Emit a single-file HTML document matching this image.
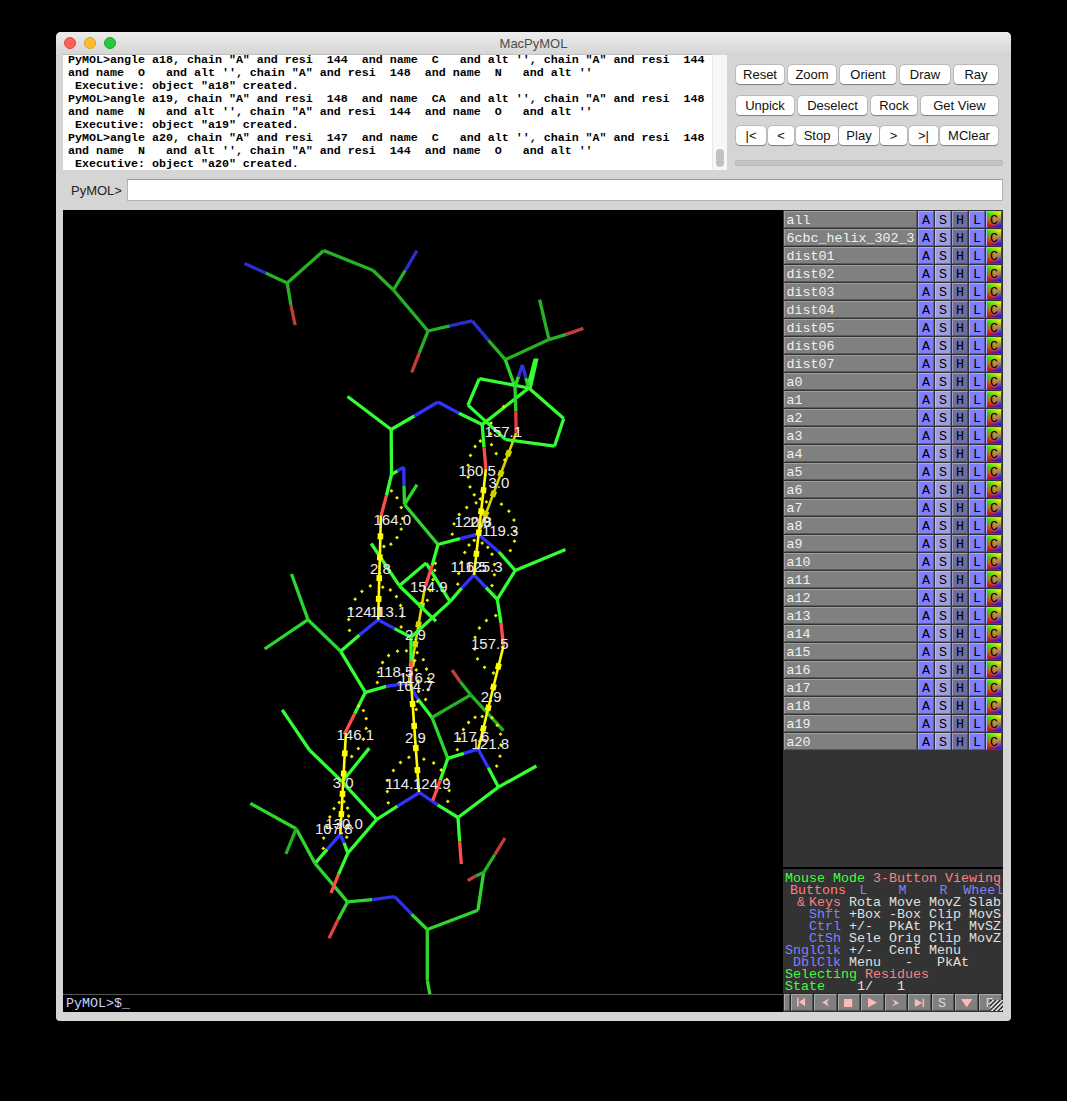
<!DOCTYPE html>
<html><head><meta charset="utf-8">
<style>
*{margin:0;padding:0;box-sizing:border-box}
html,body{width:1067px;height:1101px;background:#000;overflow:hidden;position:relative;font-family:"Liberation Sans",sans-serif}
.abs{position:absolute}
#win{position:absolute;left:56px;top:32px;width:955px;height:989px;background:#d5d5d5;border-radius:5px 5px 4px 4px;overflow:hidden}
#title{position:absolute;left:0;top:0;width:955px;height:22px;background:linear-gradient(#ececec,#d6d6d6);text-align:center;font-size:13px;line-height:24px;color:#4d4d4d}
.dot{position:absolute;top:5px;width:12px;height:12px;border-radius:50%}
#console{position:absolute;left:7px;top:22px;width:649px;height:116px;background:#fff;overflow:hidden;border-top:1px solid #bfbfbf}
#console pre{position:absolute;left:5px;top:-1px;font-family:"Liberation Mono",monospace;font-weight:bold;font-size:11.67px;line-height:13px;color:#000;white-space:pre}
#sbar{position:absolute;left:656px;top:23px;width:15px;height:115px;background:#f7f7f7;border-left:1px solid #e8e8e8}
#thumb{position:absolute;left:3px;top:94px;width:8px;height:18px;background:#c2c2c2;border-radius:4px}
.btn{position:absolute;height:19px;background:#fff;border-radius:4px;box-shadow:0 0.5px 1px rgba(0,0,0,0.35),0 0 0 0.5px rgba(0,0,0,0.18);font-size:13px;line-height:19px;text-align:center;color:#111}
#prog{position:absolute;left:679px;top:128px;width:268px;height:6px;background:#c4c4c4;border:1px solid #b8b8b8;border-radius:2px}
#cmdlabel{position:absolute;left:15px;top:151px;font-size:13px;color:#222;line-height:16px}
#cmd{position:absolute;left:71px;top:147px;width:876px;height:22px;background:#fff;border:1px solid #b4b4b4;border-top-color:#999}
#view{position:absolute;left:7px;top:178px;width:720px;height:785px;background:#000;overflow:hidden}
#cline{position:absolute;left:7px;top:962px;width:720px;height:18px;background:#000;border-top:1px solid #555}
#cline span{position:absolute;left:3px;top:2px;font-family:"Liberation Mono",monospace;font-size:13.33px;line-height:14px;color:#d0d0ff}
#panel{position:absolute;left:727px;top:178px;width:220px;height:802px;background:#333}
.orow{position:absolute;left:0;width:220px;height:18px;background:#333}
.oname{position:absolute;left:1px;top:1px;width:133px;height:17px;background:#808080;border-top:1px solid #a0a0a0;border-left:1px solid #a0a0a0;border-bottom:1px solid #5a5a5a;border-right:1px solid #5a5a5a;font-family:"Liberation Mono",monospace;font-size:13.33px;line-height:18.5px;color:#f0f0f0;padding-left:1.5px;white-space:pre}
.ob{position:absolute;top:1px;width:16px;height:17px;font-family:"Liberation Mono",monospace;font-size:13.33px;line-height:18.5px;color:#000;text-align:center;border-top:1px solid rgba(255,255,255,0.35);border-left:1px solid rgba(255,255,255,0.35);border-bottom:1px solid rgba(0,0,0,0.3);border-right:1px solid rgba(0,0,0,0.3)}
.ba{left:135px;background:#8080ff}
.bs{left:152px;background:#9f9fdf}
.bh{left:169px;background:#6f6f9f}
.bl{left:186px;background:#8080ff}
.bc{left:203px;background:linear-gradient(to right,#ff0000,#1a00ff);border-top-color:#b4b4ff;border-left-color:#b4b4ff;border-bottom-color:#404080;border-right-color:#404080}
.bc::before{content:"";position:absolute;left:0;top:0;right:0;bottom:0;background:linear-gradient(to right,#00ff00,#ffff00);-webkit-mask-image:linear-gradient(to bottom,#000,transparent);mask-image:linear-gradient(to bottom,#000,transparent)}
.bc::after{content:"";position:absolute;left:0;top:0;right:0;bottom:0;background:radial-gradient(circle at 50% 50%,rgba(255,130,30,0.75) 0%,rgba(255,130,30,0) 70%)}
.bc span{position:relative;z-index:1}
#ptext{position:absolute;left:0;top:657px;width:220px;height:127px;background:#333;border-top:2px solid #000}
.pt{position:absolute;font-family:"Liberation Mono",monospace;font-size:13.33px;line-height:12px;white-space:pre}
.g{color:#40ff40} .r{color:#ff7f7f} .b{color:#7f7fff}
#pbtns{position:absolute;left:0;top:783px;width:220px;height:18px;background:#262626}
.pb{position:absolute;top:1px;height:17px;background:#808080;border-top:1px solid #a8a8a8;border-left:1px solid #a8a8a8;border-bottom:1px solid #505050;border-right:1px solid #505050}
</style></head><body>
<div id="win">
 <div id="title">MacPyMOL
  <div class="dot" style="left:8px;background:#fe5f57;border:0.5px solid #e2463f"></div>
  <div class="dot" style="left:28px;background:#febc2e;border:0.5px solid #e1a116"></div>
  <div class="dot" style="left:48px;background:#28c840;border:0.5px solid #1aab29"></div>
 </div>
 <div id="console"><pre>PyMOL&gt;angle a18, chain "A" and resi  144  and name  C   and alt '', chain "A" and resi  144
and name  O   and alt '', chain "A" and resi  148  and name  N   and alt ''
 Executive: object "a18" created.
PyMOL&gt;angle a19, chain "A" and resi  148  and name  CA  and alt '', chain "A" and resi  148
and name  N   and alt '', chain "A" and resi  144  and name  O   and alt ''
 Executive: object "a19" created.
PyMOL&gt;angle a20, chain "A" and resi  147  and name  C   and alt '', chain "A" and resi  148
and name  N   and alt '', chain "A" and resi  144  and name  O   and alt ''
 Executive: object "a20" created.</pre></div>
 <div id="sbar"><div id="thumb"></div></div>
 <div class="btn" style="left:680px;top:33px;width:48px">Reset</div>
 <div class="btn" style="left:732px;top:33px;width:48px">Zoom</div>
 <div class="btn" style="left:784px;top:33px;width:56px">Orient</div>
 <div class="btn" style="left:844px;top:33px;width:50px">Draw</div>
 <div class="btn" style="left:898px;top:33px;width:44px">Ray</div>
 <div class="btn" style="left:680px;top:64px;width:58px">Unpick</div>
 <div class="btn" style="left:742px;top:64px;width:69px">Deselect</div>
 <div class="btn" style="left:815px;top:64px;width:46px">Rock</div>
 <div class="btn" style="left:865px;top:64px;width:77px">Get View</div>
 <div class="btn" style="left:680px;top:94px;width:30px">|&lt;</div>
 <div class="btn" style="left:712px;top:94px;width:26px">&lt;</div>
 <div class="btn" style="left:740px;top:94px;width:42px">Stop</div>
 <div class="btn" style="left:783px;top:94px;width:40px">Play</div>
 <div class="btn" style="left:824px;top:94px;width:27px">&gt;</div>
 <div class="btn" style="left:853px;top:94px;width:29px">&gt;|</div>
 <div class="btn" style="left:884px;top:94px;width:58px">MClear</div>
 <div id="prog"></div>
 <div id="cmdlabel">PyMOL&gt;</div>
 <div id="cmd"></div>
 <div id="view"><svg width="720" height="785" viewBox="63 210 720 785" style="position:absolute;left:0;top:0">
<line x1="516.1" y1="433.0" x2="478.2" y2="534.3" stroke="#d2d200" stroke-width="2.6"/>
<rect x="-3" y="-2.8" width="6" height="5.6" fill="#d2d200" transform="translate(508.5,453.3) rotate(110.5)"/>
<rect x="-3" y="-2.8" width="6" height="5.6" fill="#d2d200" transform="translate(500.9,473.5) rotate(110.5)"/>
<rect x="-3" y="-2.8" width="6" height="5.6" fill="#d2d200" transform="translate(493.4,493.8) rotate(110.5)"/>
<rect x="-3" y="-2.8" width="6" height="5.6" fill="#d2d200" transform="translate(485.8,514.0) rotate(110.5)"/>
<line x1="425.1" y1="585.8" x2="408.7" y2="682.9" stroke="#d8d800" stroke-width="2.6"/>
<rect x="-3" y="-2.8" width="6" height="5.6" fill="#d8d800" transform="translate(421.8,605.2) rotate(99.6)"/>
<rect x="-3" y="-2.8" width="6" height="5.6" fill="#d8d800" transform="translate(418.5,624.6) rotate(99.6)"/>
<rect x="-3" y="-2.8" width="6" height="5.6" fill="#d8d800" transform="translate(415.3,644.1) rotate(99.6)"/>
<rect x="-3" y="-2.8" width="6" height="5.6" fill="#d8d800" transform="translate(412.0,663.5) rotate(99.6)"/>
<g stroke-width="3.3" stroke-linecap="butt" fill="none">
<line x1="244.6" y1="263.4" x2="265.6" y2="273.1" stroke="#2d2dcd"/>
<line x1="265.6" y1="273.1" x2="287.2" y2="282.9" stroke="#25b225"/>
<line x1="287.2" y1="282.9" x2="290.9" y2="305.0" stroke="#25b225"/>
<line x1="290.9" y1="305.0" x2="295.2" y2="325.2" stroke="#c33c3c"/>
<line x1="287.2" y1="282.9" x2="323.7" y2="250.6" stroke="#25b225"/>
<line x1="323.7" y1="250.6" x2="372.8" y2="270.3" stroke="#25b225"/>
<line x1="372.8" y1="270.3" x2="393.4" y2="290.0" stroke="#25b225"/>
<line x1="393.4" y1="290.0" x2="405.3" y2="270.3" stroke="#25b225"/>
<line x1="405.3" y1="270.3" x2="417.0" y2="250.6" stroke="#2d2dcd"/>
<line x1="393.4" y1="290.0" x2="428.0" y2="331.0" stroke="#25b225"/>
<line x1="428.0" y1="331.0" x2="419.3" y2="352.8" stroke="#25b225"/>
<line x1="419.3" y1="352.8" x2="411.7" y2="372.5" stroke="#c33c3c"/>
<line x1="428.0" y1="331.0" x2="449.7" y2="325.9" stroke="#25b225"/>
<line x1="449.7" y1="325.9" x2="472.2" y2="320.9" stroke="#2d2dcd"/>
<line x1="472.2" y1="320.9" x2="488.5" y2="340.4" stroke="#2d2dcd"/>
<line x1="488.5" y1="340.4" x2="505.3" y2="359.7" stroke="#25b225"/>
<line x1="505.3" y1="359.7" x2="549.0" y2="339.6" stroke="#25b225"/>
<line x1="549.0" y1="339.6" x2="539.6" y2="299.7" stroke="#25b225"/>
<line x1="549.0" y1="339.6" x2="566.4" y2="334.4" stroke="#25b225"/>
<line x1="566.4" y1="334.4" x2="583.3" y2="328.4" stroke="#c33c3c"/>
<line x1="505.3" y1="359.7" x2="515.0" y2="387.0" stroke="#2dd72d"/>
<line x1="479.3" y1="378.6" x2="528.8" y2="388.0" stroke="#33ff33"/>
<line x1="479.3" y1="378.6" x2="468.0" y2="405.1" stroke="#33ff33"/>
<line x1="468.0" y1="405.1" x2="505.6" y2="439.6" stroke="#33ff33"/>
<line x1="505.6" y1="439.6" x2="554.5" y2="446.2" stroke="#33ff33"/>
<line x1="554.5" y1="446.2" x2="563.7" y2="418.6" stroke="#33ff33"/>
<line x1="563.7" y1="418.6" x2="528.8" y2="388.0" stroke="#33ff33"/>
<line x1="528.8" y1="388.0" x2="482.2" y2="424.6" stroke="#33ff33"/>
<polygon points="533.6,358.5 538.6,358.5 531.5,390 525.8,388" fill="#33ff33" stroke="none"/>
<line x1="515.0" y1="387.0" x2="518.5" y2="376.4" stroke="#2dd72d"/>
<line x1="518.5" y1="376.4" x2="522.4" y2="364.8" stroke="#3030e1"/>
<line x1="522.4" y1="364.8" x2="525.8" y2="378.1" stroke="#3030e1"/>
<line x1="525.8" y1="378.1" x2="528.4" y2="387.0" stroke="#2dd72d"/>
<line x1="515.0" y1="387.0" x2="515.8" y2="411.2" stroke="#2dd72d"/>
<line x1="515.8" y1="411.2" x2="516.1" y2="433.0" stroke="#e14141"/>
<line x1="347.5" y1="396.5" x2="391.2" y2="429.5" stroke="#33ff33"/>
<line x1="391.2" y1="429.5" x2="414.3" y2="416.0" stroke="#33ff33"/>
<line x1="414.3" y1="416.0" x2="438.0" y2="402.0" stroke="#3333ff"/>
<line x1="438.0" y1="402.0" x2="459.0" y2="413.3" stroke="#3333ff"/>
<line x1="459.0" y1="413.3" x2="482.2" y2="424.6" stroke="#33ff33"/>
<line x1="482.2" y1="424.6" x2="484.0" y2="447.4" stroke="#33ff33"/>
<line x1="484.0" y1="447.4" x2="485.9" y2="469.0" stroke="#ff4c4c"/>
<line x1="391.2" y1="429.5" x2="391.5" y2="474.5" stroke="#33ff33"/>
<line x1="391.5" y1="474.5" x2="397.6" y2="470.9" stroke="#33ff33"/>
<line x1="397.6" y1="470.9" x2="403.8" y2="467.2" stroke="#3333ff"/>
<line x1="403.8" y1="467.2" x2="404.0" y2="485.7" stroke="#3333ff"/>
<line x1="404.0" y1="485.7" x2="404.5" y2="504.5" stroke="#2dd72d"/>
<line x1="404.5" y1="504.5" x2="417.0" y2="484.7" stroke="#2dd72d"/>
<line x1="404.5" y1="504.5" x2="438.0" y2="544.5" stroke="#2dd72d"/>
<line x1="391.5" y1="474.5" x2="386.4" y2="495.7" stroke="#33ff33"/>
<line x1="386.4" y1="495.7" x2="381.0" y2="516.0" stroke="#ff4c4c"/>
<line x1="438.0" y1="544.5" x2="460.0" y2="538.7" stroke="#33ff33"/>
<line x1="460.0" y1="538.7" x2="478.2" y2="534.2" stroke="#3333ff"/>
<line x1="478.2" y1="534.2" x2="499.0" y2="552.0" stroke="#3333ff"/>
<line x1="499.0" y1="552.0" x2="515.2" y2="570.5" stroke="#33ff33"/>
<line x1="515.2" y1="570.5" x2="565.5" y2="549.6" stroke="#33ff33"/>
<line x1="515.2" y1="570.5" x2="497.3" y2="599.3" stroke="#33ff33"/>
<line x1="497.3" y1="599.3" x2="486.0" y2="587.5" stroke="#33ff33"/>
<line x1="486.0" y1="587.5" x2="474.0" y2="574.9" stroke="#3333ff"/>
<line x1="474.0" y1="574.9" x2="461.6" y2="588.2" stroke="#3333ff"/>
<line x1="461.6" y1="588.2" x2="450.0" y2="601.6" stroke="#33ff33"/>
<line x1="450.0" y1="601.6" x2="426.2" y2="563.1" stroke="#33ff33"/>
<line x1="426.2" y1="563.1" x2="399.3" y2="585.7" stroke="#33ff33"/>
<line x1="399.3" y1="585.7" x2="371.2" y2="543.5" stroke="#33ff33"/>
<line x1="450.0" y1="601.6" x2="411.0" y2="637.2" stroke="#33ff33"/>
<line x1="399.3" y1="585.7" x2="436.0" y2="621.2" stroke="#33ff33"/>
<line x1="438.0" y1="544.5" x2="432.1" y2="565.7" stroke="#33ff33"/>
<line x1="432.1" y1="565.7" x2="425.5" y2="586.0" stroke="#ff4c4c"/>
<line x1="497.3" y1="599.3" x2="501.0" y2="623.0" stroke="#33ff33"/>
<line x1="501.0" y1="623.0" x2="503.5" y2="645.7" stroke="#ff4c4c"/>
<line x1="291.5" y1="574.0" x2="308.0" y2="619.7" stroke="#2dd72d"/>
<line x1="264.6" y1="649.0" x2="308.0" y2="619.7" stroke="#2dd72d"/>
<line x1="308.0" y1="619.7" x2="340.7" y2="651.3" stroke="#2dd72d"/>
<line x1="340.7" y1="651.3" x2="359.5" y2="634.9" stroke="#33ff33"/>
<line x1="359.5" y1="634.9" x2="378.2" y2="619.7" stroke="#3333ff"/>
<line x1="378.2" y1="619.7" x2="394.6" y2="628.6" stroke="#3333ff"/>
<line x1="394.6" y1="628.6" x2="411.0" y2="637.2" stroke="#33ff33"/>
<line x1="411.0" y1="637.2" x2="411.0" y2="660.7" stroke="#33ff33"/>
<line x1="411.0" y1="660.7" x2="411.0" y2="681.8" stroke="#ff4c4c"/>
<line x1="340.7" y1="651.3" x2="365.4" y2="692.3" stroke="#33ff33"/>
<line x1="365.4" y1="692.3" x2="386.4" y2="686.4" stroke="#33ff33"/>
<line x1="386.4" y1="686.4" x2="408.7" y2="682.9" stroke="#3333ff"/>
<line x1="408.7" y1="682.9" x2="418.0" y2="699.3" stroke="#3333ff"/>
<line x1="418.0" y1="699.3" x2="432.0" y2="717.5" stroke="#33ff33"/>
<line x1="432.0" y1="717.5" x2="470.7" y2="694.8" stroke="#25b225"/>
<line x1="470.7" y1="694.8" x2="460.2" y2="681.8" stroke="#25b225"/>
<line x1="460.2" y1="681.8" x2="452.0" y2="670.0" stroke="#c33c3c"/>
<line x1="470.7" y1="694.8" x2="503.5" y2="730.6" stroke="#25b225"/>
<line x1="432.0" y1="717.5" x2="447.8" y2="758.4" stroke="#2dd72d"/>
<line x1="365.4" y1="692.3" x2="354.8" y2="713.4" stroke="#33ff33"/>
<line x1="354.8" y1="713.4" x2="344.3" y2="734.5" stroke="#ff4c4c"/>
<line x1="282.2" y1="709.8" x2="309.4" y2="750.0" stroke="#33ff33"/>
<line x1="309.4" y1="750.0" x2="342.2" y2="781.8" stroke="#33ff33"/>
<line x1="342.2" y1="781.8" x2="369.3" y2="748.1" stroke="#33ff33"/>
<line x1="342.2" y1="781.8" x2="376.8" y2="819.3" stroke="#33ff33"/>
<line x1="376.8" y1="819.3" x2="397.5" y2="806.2" stroke="#33ff33"/>
<line x1="397.5" y1="806.2" x2="419.5" y2="792.5" stroke="#3333ff"/>
<line x1="419.5" y1="792.5" x2="437.7" y2="804.8" stroke="#3333ff"/>
<line x1="437.7" y1="804.8" x2="458.0" y2="817.5" stroke="#33ff33"/>
<line x1="447.8" y1="758.4" x2="463.9" y2="753.4" stroke="#33ff33"/>
<line x1="463.9" y1="753.4" x2="478.2" y2="749.2" stroke="#3333ff"/>
<line x1="478.2" y1="749.2" x2="488.3" y2="767.7" stroke="#3333ff"/>
<line x1="488.3" y1="767.7" x2="498.4" y2="787.1" stroke="#33ff33"/>
<line x1="498.4" y1="787.1" x2="536.4" y2="766.0" stroke="#33ff33"/>
<line x1="498.4" y1="787.1" x2="458.0" y2="817.5" stroke="#33ff33"/>
<line x1="447.8" y1="758.4" x2="440.2" y2="780.4" stroke="#33ff33"/>
<line x1="440.2" y1="780.4" x2="432.7" y2="800.6" stroke="#ff4c4c"/>
<line x1="458.0" y1="817.5" x2="459.6" y2="841.1" stroke="#33ff33"/>
<line x1="459.6" y1="841.1" x2="461.3" y2="864.0" stroke="#ff4c4c"/>
<line x1="376.8" y1="819.3" x2="347.8" y2="853.1" stroke="#33ff33"/>
<line x1="347.8" y1="853.1" x2="344.0" y2="842.8" stroke="#33ff33"/>
<line x1="344.0" y1="842.8" x2="340.3" y2="834.3" stroke="#3333ff"/>
<line x1="340.3" y1="834.3" x2="327.2" y2="849.3" stroke="#3333ff"/>
<line x1="327.2" y1="849.3" x2="315.0" y2="863.4" stroke="#33ff33"/>
<line x1="250.3" y1="803.4" x2="296.2" y2="828.7" stroke="#2dd72d"/>
<line x1="296.2" y1="828.7" x2="315.0" y2="863.4" stroke="#2dd72d"/>
<line x1="296.2" y1="828.7" x2="285.9" y2="854.0" stroke="#25b225"/>
<line x1="315.0" y1="863.4" x2="347.5" y2="901.9" stroke="#2dd72d"/>
<line x1="347.8" y1="853.1" x2="338.4" y2="874.6" stroke="#33ff33"/>
<line x1="338.4" y1="874.6" x2="331.0" y2="893.0" stroke="#ff4c4c"/>
<line x1="347.5" y1="901.9" x2="372.2" y2="899.6" stroke="#2dd72d"/>
<line x1="372.2" y1="899.6" x2="394.7" y2="896.7" stroke="#3030e1"/>
<line x1="394.7" y1="896.7" x2="411.6" y2="914.2" stroke="#3030e1"/>
<line x1="411.6" y1="914.2" x2="427.3" y2="929.5" stroke="#2dd72d"/>
<line x1="427.3" y1="929.5" x2="477.9" y2="910.2" stroke="#2dd72d"/>
<line x1="477.9" y1="910.2" x2="483.6" y2="872.6" stroke="#2dd72d"/>
<line x1="483.6" y1="872.6" x2="494.8" y2="854.6" stroke="#25b225"/>
<line x1="494.8" y1="854.6" x2="505.0" y2="838.0" stroke="#c33c3c"/>
<line x1="483.6" y1="872.6" x2="475.7" y2="876.0" stroke="#25b225"/>
<line x1="475.7" y1="876.0" x2="467.8" y2="880.5" stroke="#c33c3c"/>
<line x1="427.3" y1="929.5" x2="427.3" y2="980.6" stroke="#2dd72d"/>
<line x1="427.3" y1="980.6" x2="430.2" y2="996.0" stroke="#2dd72d"/>
<line x1="347.5" y1="901.9" x2="338.0" y2="919.8" stroke="#2dd72d"/>
<line x1="338.0" y1="919.8" x2="329.0" y2="938.3" stroke="#e14141"/>
</g>
<g>
<line x1="485.9" y1="469.0" x2="474.0" y2="575.0" stroke="#ffff00" stroke-width="2.6"/>
<rect x="-3" y="-2.8" width="6" height="5.6" fill="#ffff00" transform="translate(483.5,490.2) rotate(96.4)"/>
<rect x="-3" y="-2.8" width="6" height="5.6" fill="#ffff00" transform="translate(481.1,511.4) rotate(96.4)"/>
<rect x="-3" y="-2.8" width="6" height="5.6" fill="#ffff00" transform="translate(478.8,532.6) rotate(96.4)"/>
<rect x="-3" y="-2.8" width="6" height="5.6" fill="#ffff00" transform="translate(476.4,553.8) rotate(96.4)"/>
<line x1="380.9" y1="515.6" x2="378.2" y2="619.7" stroke="#ffff00" stroke-width="2.6"/>
<rect x="-3" y="-2.8" width="6" height="5.6" fill="#ffff00" transform="translate(380.4,536.4) rotate(91.5)"/>
<rect x="-3" y="-2.8" width="6" height="5.6" fill="#ffff00" transform="translate(379.8,557.2) rotate(91.5)"/>
<rect x="-3" y="-2.8" width="6" height="5.6" fill="#ffff00" transform="translate(379.3,578.1) rotate(91.5)"/>
<rect x="-3" y="-2.8" width="6" height="5.6" fill="#ffff00" transform="translate(378.7,598.9) rotate(91.5)"/>
<line x1="411.0" y1="681.8" x2="419.0" y2="792.2" stroke="#ffff00" stroke-width="2.6"/>
<rect x="-3" y="-2.8" width="6" height="5.6" fill="#ffff00" transform="translate(412.6,703.9) rotate(85.9)"/>
<rect x="-3" y="-2.8" width="6" height="5.6" fill="#ffff00" transform="translate(414.2,726.0) rotate(85.9)"/>
<rect x="-3" y="-2.8" width="6" height="5.6" fill="#ffff00" transform="translate(415.8,748.0) rotate(85.9)"/>
<rect x="-3" y="-2.8" width="6" height="5.6" fill="#ffff00" transform="translate(417.4,770.1) rotate(85.9)"/>
<line x1="503.5" y1="645.7" x2="478.2" y2="749.2" stroke="#ffff00" stroke-width="2.6"/>
<rect x="-3" y="-2.8" width="6" height="5.6" fill="#ffff00" transform="translate(498.4,666.4) rotate(103.7)"/>
<rect x="-3" y="-2.8" width="6" height="5.6" fill="#ffff00" transform="translate(493.4,687.1) rotate(103.7)"/>
<rect x="-3" y="-2.8" width="6" height="5.6" fill="#ffff00" transform="translate(488.3,707.8) rotate(103.7)"/>
<rect x="-3" y="-2.8" width="6" height="5.6" fill="#ffff00" transform="translate(483.3,728.5) rotate(103.7)"/>
<line x1="345.9" y1="733.1" x2="340.3" y2="834.3" stroke="#ffff00" stroke-width="2.6"/>
<rect x="-3" y="-2.8" width="6" height="5.6" fill="#ffff00" transform="translate(344.8,753.3) rotate(93.2)"/>
<rect x="-3" y="-2.8" width="6" height="5.6" fill="#ffff00" transform="translate(343.7,773.6) rotate(93.2)"/>
<rect x="-3" y="-2.8" width="6" height="5.6" fill="#ffff00" transform="translate(342.5,793.8) rotate(93.2)"/>
<rect x="-3" y="-2.8" width="6" height="5.6" fill="#ffff00" transform="translate(341.4,814.1) rotate(93.2)"/>
</g>
<g fill="#f0f000">
<rect x="502.35" y="405.35" width="2.7" height="2.7" transform="rotate(45 503.7 406.7)"/>
<rect x="489.65" y="421.75" width="2.7" height="2.7" transform="rotate(45 491.0 423.1)"/>
<rect x="489.25" y="432.55" width="2.7" height="2.7" transform="rotate(45 490.6 433.9)"/>
<rect x="490.15" y="443.35" width="2.7" height="2.7" transform="rotate(45 491.5 444.7)"/>
<rect x="494.85" y="452.25" width="2.7" height="2.7" transform="rotate(45 496.2 453.6)"/>
<rect x="503.35" y="458.75" width="2.7" height="2.7" transform="rotate(45 504.7 460.1)"/>
<rect x="478.95" y="439.65" width="2.7" height="2.7" transform="rotate(45 480.3 441.0)"/>
<rect x="473.75" y="445.15" width="2.7" height="2.7" transform="rotate(45 475.1 446.5)"/>
<rect x="469.15" y="454.05" width="2.7" height="2.7" transform="rotate(45 470.5 455.4)"/>
<rect x="466.75" y="463.95" width="2.7" height="2.7" transform="rotate(45 468.1 465.3)"/>
<rect x="466.75" y="475.65" width="2.7" height="2.7" transform="rotate(45 468.1 477.0)"/>
<rect x="468.65" y="485.55" width="2.7" height="2.7" transform="rotate(45 470.0 486.9)"/>
<rect x="472.85" y="493.45" width="2.7" height="2.7" transform="rotate(45 474.2 494.8)"/>
<rect x="478.95" y="497.65" width="2.7" height="2.7" transform="rotate(45 480.3 499.0)"/>
<rect x="485.05" y="500.55" width="2.7" height="2.7" transform="rotate(45 486.4 501.9)"/>
<rect x="474.75" y="501.45" width="2.7" height="2.7" transform="rotate(45 476.1 502.8)"/>
<rect x="465.35" y="506.15" width="2.7" height="2.7" transform="rotate(45 466.7 507.5)"/>
<rect x="457.85" y="513.15" width="2.7" height="2.7" transform="rotate(45 459.2 514.5)"/>
<rect x="452.65" y="522.55" width="2.7" height="2.7" transform="rotate(45 454.0 523.9)"/>
<rect x="450.85" y="532.85" width="2.7" height="2.7" transform="rotate(45 452.2 534.2)"/>
<rect x="500.05" y="502.85" width="2.7" height="2.7" transform="rotate(45 501.4 504.2)"/>
<rect x="507.55" y="509.85" width="2.7" height="2.7" transform="rotate(45 508.9 511.2)"/>
<rect x="512.65" y="518.75" width="2.7" height="2.7" transform="rotate(45 514.0 520.1)"/>
<rect x="513.65" y="530.05" width="2.7" height="2.7" transform="rotate(45 515.0 531.4)"/>
<rect x="513.15" y="539.85" width="2.7" height="2.7" transform="rotate(45 514.5 541.2)"/>
<rect x="508.95" y="549.25" width="2.7" height="2.7" transform="rotate(45 510.3 550.6)"/>
<rect x="472.85" y="538.95" width="2.7" height="2.7" transform="rotate(45 474.2 540.3)"/>
<rect x="467.65" y="543.65" width="2.7" height="2.7" transform="rotate(45 469.0 545.0)"/>
<rect x="463.45" y="551.15" width="2.7" height="2.7" transform="rotate(45 464.8 552.5)"/>
<rect x="460.25" y="560.85" width="2.7" height="2.7" transform="rotate(45 461.6 562.2)"/>
<rect x="457.35" y="572.05" width="2.7" height="2.7" transform="rotate(45 458.7 573.4)"/>
<rect x="456.45" y="582.85" width="2.7" height="2.7" transform="rotate(45 457.8 584.2)"/>
<rect x="480.85" y="541.75" width="2.7" height="2.7" transform="rotate(45 482.2 543.1)"/>
<rect x="486.45" y="545.95" width="2.7" height="2.7" transform="rotate(45 487.8 547.3)"/>
<rect x="490.65" y="552.85" width="2.7" height="2.7" transform="rotate(45 492.0 554.2)"/>
<rect x="493.05" y="563.15" width="2.7" height="2.7" transform="rotate(45 494.4 564.5)"/>
<rect x="493.05" y="573.45" width="2.7" height="2.7" transform="rotate(45 494.4 574.8)"/>
<rect x="490.65" y="584.25" width="2.7" height="2.7" transform="rotate(45 492.0 585.6)"/>
<rect x="390.05" y="489.45" width="2.7" height="2.7" transform="rotate(45 391.4 490.8)"/>
<rect x="395.65" y="496.45" width="2.7" height="2.7" transform="rotate(45 397.0 497.8)"/>
<rect x="399.85" y="506.25" width="2.7" height="2.7" transform="rotate(45 401.2 507.6)"/>
<rect x="401.25" y="517.05" width="2.7" height="2.7" transform="rotate(45 402.6 518.4)"/>
<rect x="399.85" y="527.85" width="2.7" height="2.7" transform="rotate(45 401.2 529.2)"/>
<rect x="395.65" y="536.25" width="2.7" height="2.7" transform="rotate(45 397.0 537.6)"/>
<rect x="389.55" y="542.85" width="2.7" height="2.7" transform="rotate(45 390.9 544.2)"/>
<rect x="382.55" y="545.15" width="2.7" height="2.7" transform="rotate(45 383.9 546.5)"/>
<rect x="368.95" y="584.55" width="2.7" height="2.7" transform="rotate(45 370.3 585.9)"/>
<rect x="360.55" y="590.05" width="2.7" height="2.7" transform="rotate(45 361.9 591.4)"/>
<rect x="353.75" y="597.85" width="2.7" height="2.7" transform="rotate(45 355.1 599.2)"/>
<rect x="349.85" y="607.65" width="2.7" height="2.7" transform="rotate(45 351.2 609.0)"/>
<rect x="347.35" y="618.15" width="2.7" height="2.7" transform="rotate(45 348.7 619.5)"/>
<rect x="348.15" y="629.05" width="2.7" height="2.7" transform="rotate(45 349.5 630.4)"/>
<rect x="381.45" y="585.85" width="2.7" height="2.7" transform="rotate(45 382.8 587.2)"/>
<rect x="388.95" y="588.65" width="2.7" height="2.7" transform="rotate(45 390.3 590.0)"/>
<rect x="395.05" y="595.25" width="2.7" height="2.7" transform="rotate(45 396.4 596.6)"/>
<rect x="399.25" y="604.15" width="2.7" height="2.7" transform="rotate(45 400.6 605.5)"/>
<rect x="400.65" y="614.85" width="2.7" height="2.7" transform="rotate(45 402.0 616.2)"/>
<rect x="399.75" y="625.65" width="2.7" height="2.7" transform="rotate(45 401.1 627.0)"/>
<rect x="433.95" y="561.95" width="2.7" height="2.7" transform="rotate(45 435.3 563.3)"/>
<rect x="433.45" y="568.95" width="2.7" height="2.7" transform="rotate(45 434.8 570.3)"/>
<rect x="431.65" y="578.35" width="2.7" height="2.7" transform="rotate(45 433.0 579.7)"/>
<rect x="428.75" y="589.15" width="2.7" height="2.7" transform="rotate(45 430.1 590.5)"/>
<rect x="425.95" y="598.95" width="2.7" height="2.7" transform="rotate(45 427.3 600.3)"/>
<rect x="494.45" y="614.25" width="2.7" height="2.7" transform="rotate(45 495.8 615.6)"/>
<rect x="485.05" y="619.15" width="2.7" height="2.7" transform="rotate(45 486.4 620.5)"/>
<rect x="478.05" y="626.65" width="2.7" height="2.7" transform="rotate(45 479.4 628.0)"/>
<rect x="473.75" y="635.95" width="2.7" height="2.7" transform="rotate(45 475.1 637.3)"/>
<rect x="473.35" y="647.65" width="2.7" height="2.7" transform="rotate(45 474.7 649.0)"/>
<rect x="476.15" y="657.55" width="2.7" height="2.7" transform="rotate(45 477.5 658.9)"/>
<rect x="483.15" y="665.95" width="2.7" height="2.7" transform="rotate(45 484.5 667.3)"/>
<rect x="492.05" y="671.65" width="2.7" height="2.7" transform="rotate(45 493.4 673.0)"/>
<rect x="405.05" y="649.45" width="2.7" height="2.7" transform="rotate(45 406.4 650.8)"/>
<rect x="396.15" y="649.85" width="2.7" height="2.7" transform="rotate(45 397.5 651.2)"/>
<rect x="387.25" y="654.15" width="2.7" height="2.7" transform="rotate(45 388.6 655.5)"/>
<rect x="381.15" y="661.15" width="2.7" height="2.7" transform="rotate(45 382.5 662.5)"/>
<rect x="376.95" y="670.95" width="2.7" height="2.7" transform="rotate(45 378.3 672.3)"/>
<rect x="375.95" y="681.25" width="2.7" height="2.7" transform="rotate(45 377.3 682.6)"/>
<rect x="415.85" y="651.35" width="2.7" height="2.7" transform="rotate(45 417.2 652.7)"/>
<rect x="421.95" y="658.35" width="2.7" height="2.7" transform="rotate(45 423.3 659.7)"/>
<rect x="425.15" y="667.65" width="2.7" height="2.7" transform="rotate(45 426.5 669.0)"/>
<rect x="427.05" y="677.05" width="2.7" height="2.7" transform="rotate(45 428.4 678.4)"/>
<rect x="426.65" y="688.35" width="2.7" height="2.7" transform="rotate(45 428.0 689.7)"/>
<rect x="424.25" y="698.15" width="2.7" height="2.7" transform="rotate(45 425.6 699.5)"/>
<rect x="413.45" y="659.25" width="2.7" height="2.7" transform="rotate(45 414.8 660.6)"/>
<rect x="414.85" y="668.65" width="2.7" height="2.7" transform="rotate(45 416.2 670.0)"/>
<rect x="416.75" y="679.45" width="2.7" height="2.7" transform="rotate(45 418.1 680.8)"/>
<rect x="417.25" y="690.15" width="2.7" height="2.7" transform="rotate(45 418.6 691.5)"/>
<rect x="416.25" y="700.05" width="2.7" height="2.7" transform="rotate(45 417.6 701.4)"/>
<rect x="414.85" y="708.05" width="2.7" height="2.7" transform="rotate(45 416.2 709.4)"/>
<rect x="357.35" y="704.55" width="2.7" height="2.7" transform="rotate(45 358.7 705.9)"/>
<rect x="362.05" y="709.25" width="2.7" height="2.7" transform="rotate(45 363.4 710.6)"/>
<rect x="364.85" y="717.25" width="2.7" height="2.7" transform="rotate(45 366.2 718.6)"/>
<rect x="364.85" y="727.05" width="2.7" height="2.7" transform="rotate(45 366.2 728.4)"/>
<rect x="362.05" y="737.85" width="2.7" height="2.7" transform="rotate(45 363.4 739.2)"/>
<rect x="356.95" y="747.25" width="2.7" height="2.7" transform="rotate(45 358.3 748.6)"/>
<rect x="350.35" y="755.15" width="2.7" height="2.7" transform="rotate(45 351.7 756.5)"/>
<rect x="407.55" y="755.95" width="2.7" height="2.7" transform="rotate(45 408.9 757.3)"/>
<rect x="399.15" y="761.15" width="2.7" height="2.7" transform="rotate(45 400.5 762.5)"/>
<rect x="392.05" y="769.15" width="2.7" height="2.7" transform="rotate(45 393.4 770.5)"/>
<rect x="385.95" y="778.95" width="2.7" height="2.7" transform="rotate(45 387.3 780.3)"/>
<rect x="385.95" y="790.15" width="2.7" height="2.7" transform="rotate(45 387.3 791.5)"/>
<rect x="386.95" y="801.45" width="2.7" height="2.7" transform="rotate(45 388.3 802.8)"/>
<rect x="422.55" y="757.85" width="2.7" height="2.7" transform="rotate(45 423.9 759.2)"/>
<rect x="432.35" y="761.65" width="2.7" height="2.7" transform="rotate(45 433.7 763.0)"/>
<rect x="439.85" y="768.65" width="2.7" height="2.7" transform="rotate(45 441.2 770.0)"/>
<rect x="445.55" y="778.05" width="2.7" height="2.7" transform="rotate(45 446.9 779.4)"/>
<rect x="447.85" y="789.25" width="2.7" height="2.7" transform="rotate(45 449.2 790.6)"/>
<rect x="446.45" y="800.05" width="2.7" height="2.7" transform="rotate(45 447.8 801.4)"/>
<rect x="480.85" y="715.05" width="2.7" height="2.7" transform="rotate(45 482.2 716.4)"/>
<rect x="473.75" y="715.95" width="2.7" height="2.7" transform="rotate(45 475.1 717.3)"/>
<rect x="467.25" y="721.15" width="2.7" height="2.7" transform="rotate(45 468.6 722.5)"/>
<rect x="462.05" y="728.15" width="2.7" height="2.7" transform="rotate(45 463.4 729.5)"/>
<rect x="458.35" y="737.55" width="2.7" height="2.7" transform="rotate(45 459.7 738.9)"/>
<rect x="455.95" y="748.35" width="2.7" height="2.7" transform="rotate(45 457.3 749.7)"/>
<rect x="490.65" y="716.45" width="2.7" height="2.7" transform="rotate(45 492.0 717.8)"/>
<rect x="495.85" y="723.95" width="2.7" height="2.7" transform="rotate(45 497.2 725.3)"/>
<rect x="499.15" y="732.85" width="2.7" height="2.7" transform="rotate(45 500.5 734.2)"/>
<rect x="499.55" y="743.65" width="2.7" height="2.7" transform="rotate(45 500.9 745.0)"/>
<rect x="498.65" y="754.85" width="2.7" height="2.7" transform="rotate(45 500.0 756.2)"/>
<rect x="495.35" y="764.75" width="2.7" height="2.7" transform="rotate(45 496.7 766.1)"/>
<rect x="337.85" y="801.15" width="2.7" height="2.7" transform="rotate(45 339.2 802.5)"/>
<rect x="332.65" y="807.25" width="2.7" height="2.7" transform="rotate(45 334.0 808.6)"/>
<rect x="328.45" y="815.65" width="2.7" height="2.7" transform="rotate(45 329.8 817.0)"/>
<rect x="325.65" y="825.55" width="2.7" height="2.7" transform="rotate(45 327.0 826.9)"/>
<rect x="322.35" y="836.75" width="2.7" height="2.7" transform="rotate(45 323.7 838.1)"/>
<rect x="321.95" y="847.05" width="2.7" height="2.7" transform="rotate(45 323.3 848.4)"/>
<rect x="342.55" y="800.25" width="2.7" height="2.7" transform="rotate(45 343.9 801.6)"/>
<rect x="346.25" y="806.75" width="2.7" height="2.7" transform="rotate(45 347.6 808.1)"/>
<rect x="347.25" y="814.75" width="2.7" height="2.7" transform="rotate(45 348.6 816.1)"/>
<rect x="346.25" y="824.15" width="2.7" height="2.7" transform="rotate(45 347.6 825.5)"/>
<rect x="345.35" y="835.85" width="2.7" height="2.7" transform="rotate(45 346.7 837.2)"/>
</g>
<g font-family="Liberation Sans" font-size="15" fill="#ececec">
<text x="484.6" y="437">157.1</text>
<text x="458.4" y="475.6">160.5</text>
<text x="488.5" y="488">3.0</text>
<text x="454.4" y="527.4">120.8</text>
<text x="470" y="527">2.9</text>
<text x="482" y="535.5">119.3</text>
<text x="373.5" y="525.4">164.0</text>
<text x="370" y="574">2.8</text>
<text x="410" y="592">154.9</text>
<text x="450.4" y="572">116.5</text>
<text x="465" y="572">125.3</text>
<text x="346.6" y="617.3">124.1</text>
<text x="370" y="617.3">113.1</text>
<text x="405" y="640">2.9</text>
<text x="471" y="649">157.5</text>
<text x="377" y="677">118.5</text>
<text x="399" y="683">116.2</text>
<text x="396" y="691">164.7</text>
<text x="336.5" y="739.7">146.1</text>
<text x="405" y="743.4">2.9</text>
<text x="480.7" y="702">2.9</text>
<text x="452.9" y="742.4">117.6</text>
<text x="471.5" y="749.2">121.8</text>
<text x="332.8" y="788.4">3.0</text>
<text x="385.3" y="789.3">114.1</text>
<text x="413" y="788.8">124.9</text>
<text x="325.3" y="828.7">130.0</text>
<text x="315" y="834.3">107.8</text>
</g></svg></div>
 <div id="cline"><span>PyMOL&gt;$_</span></div>
 <div id="panel">
<div class="orow" style="top:0px"><div class="oname">all</div><div class="ob ba">A</div><div class="ob bs">S</div><div class="ob bh">H</div><div class="ob bl">L</div><div class="ob bc"><span>C</span></div></div>
<div class="orow" style="top:18px"><div class="oname">6cbc_helix_302_3</div><div class="ob ba">A</div><div class="ob bs">S</div><div class="ob bh">H</div><div class="ob bl">L</div><div class="ob bc"><span>C</span></div></div>
<div class="orow" style="top:36px"><div class="oname">dist01</div><div class="ob ba">A</div><div class="ob bs">S</div><div class="ob bh">H</div><div class="ob bl">L</div><div class="ob bc"><span>C</span></div></div>
<div class="orow" style="top:54px"><div class="oname">dist02</div><div class="ob ba">A</div><div class="ob bs">S</div><div class="ob bh">H</div><div class="ob bl">L</div><div class="ob bc"><span>C</span></div></div>
<div class="orow" style="top:72px"><div class="oname">dist03</div><div class="ob ba">A</div><div class="ob bs">S</div><div class="ob bh">H</div><div class="ob bl">L</div><div class="ob bc"><span>C</span></div></div>
<div class="orow" style="top:90px"><div class="oname">dist04</div><div class="ob ba">A</div><div class="ob bs">S</div><div class="ob bh">H</div><div class="ob bl">L</div><div class="ob bc"><span>C</span></div></div>
<div class="orow" style="top:108px"><div class="oname">dist05</div><div class="ob ba">A</div><div class="ob bs">S</div><div class="ob bh">H</div><div class="ob bl">L</div><div class="ob bc"><span>C</span></div></div>
<div class="orow" style="top:126px"><div class="oname">dist06</div><div class="ob ba">A</div><div class="ob bs">S</div><div class="ob bh">H</div><div class="ob bl">L</div><div class="ob bc"><span>C</span></div></div>
<div class="orow" style="top:144px"><div class="oname">dist07</div><div class="ob ba">A</div><div class="ob bs">S</div><div class="ob bh">H</div><div class="ob bl">L</div><div class="ob bc"><span>C</span></div></div>
<div class="orow" style="top:162px"><div class="oname">a0</div><div class="ob ba">A</div><div class="ob bs">S</div><div class="ob bh">H</div><div class="ob bl">L</div><div class="ob bc"><span>C</span></div></div>
<div class="orow" style="top:180px"><div class="oname">a1</div><div class="ob ba">A</div><div class="ob bs">S</div><div class="ob bh">H</div><div class="ob bl">L</div><div class="ob bc"><span>C</span></div></div>
<div class="orow" style="top:198px"><div class="oname">a2</div><div class="ob ba">A</div><div class="ob bs">S</div><div class="ob bh">H</div><div class="ob bl">L</div><div class="ob bc"><span>C</span></div></div>
<div class="orow" style="top:216px"><div class="oname">a3</div><div class="ob ba">A</div><div class="ob bs">S</div><div class="ob bh">H</div><div class="ob bl">L</div><div class="ob bc"><span>C</span></div></div>
<div class="orow" style="top:234px"><div class="oname">a4</div><div class="ob ba">A</div><div class="ob bs">S</div><div class="ob bh">H</div><div class="ob bl">L</div><div class="ob bc"><span>C</span></div></div>
<div class="orow" style="top:252px"><div class="oname">a5</div><div class="ob ba">A</div><div class="ob bs">S</div><div class="ob bh">H</div><div class="ob bl">L</div><div class="ob bc"><span>C</span></div></div>
<div class="orow" style="top:270px"><div class="oname">a6</div><div class="ob ba">A</div><div class="ob bs">S</div><div class="ob bh">H</div><div class="ob bl">L</div><div class="ob bc"><span>C</span></div></div>
<div class="orow" style="top:288px"><div class="oname">a7</div><div class="ob ba">A</div><div class="ob bs">S</div><div class="ob bh">H</div><div class="ob bl">L</div><div class="ob bc"><span>C</span></div></div>
<div class="orow" style="top:306px"><div class="oname">a8</div><div class="ob ba">A</div><div class="ob bs">S</div><div class="ob bh">H</div><div class="ob bl">L</div><div class="ob bc"><span>C</span></div></div>
<div class="orow" style="top:324px"><div class="oname">a9</div><div class="ob ba">A</div><div class="ob bs">S</div><div class="ob bh">H</div><div class="ob bl">L</div><div class="ob bc"><span>C</span></div></div>
<div class="orow" style="top:342px"><div class="oname">a10</div><div class="ob ba">A</div><div class="ob bs">S</div><div class="ob bh">H</div><div class="ob bl">L</div><div class="ob bc"><span>C</span></div></div>
<div class="orow" style="top:360px"><div class="oname">a11</div><div class="ob ba">A</div><div class="ob bs">S</div><div class="ob bh">H</div><div class="ob bl">L</div><div class="ob bc"><span>C</span></div></div>
<div class="orow" style="top:378px"><div class="oname">a12</div><div class="ob ba">A</div><div class="ob bs">S</div><div class="ob bh">H</div><div class="ob bl">L</div><div class="ob bc"><span>C</span></div></div>
<div class="orow" style="top:396px"><div class="oname">a13</div><div class="ob ba">A</div><div class="ob bs">S</div><div class="ob bh">H</div><div class="ob bl">L</div><div class="ob bc"><span>C</span></div></div>
<div class="orow" style="top:414px"><div class="oname">a14</div><div class="ob ba">A</div><div class="ob bs">S</div><div class="ob bh">H</div><div class="ob bl">L</div><div class="ob bc"><span>C</span></div></div>
<div class="orow" style="top:432px"><div class="oname">a15</div><div class="ob ba">A</div><div class="ob bs">S</div><div class="ob bh">H</div><div class="ob bl">L</div><div class="ob bc"><span>C</span></div></div>
<div class="orow" style="top:450px"><div class="oname">a16</div><div class="ob ba">A</div><div class="ob bs">S</div><div class="ob bh">H</div><div class="ob bl">L</div><div class="ob bc"><span>C</span></div></div>
<div class="orow" style="top:468px"><div class="oname">a17</div><div class="ob ba">A</div><div class="ob bs">S</div><div class="ob bh">H</div><div class="ob bl">L</div><div class="ob bc"><span>C</span></div></div>
<div class="orow" style="top:486px"><div class="oname">a18</div><div class="ob ba">A</div><div class="ob bs">S</div><div class="ob bh">H</div><div class="ob bl">L</div><div class="ob bc"><span>C</span></div></div>
<div class="orow" style="top:504px"><div class="oname">a19</div><div class="ob ba">A</div><div class="ob bs">S</div><div class="ob bh">H</div><div class="ob bl">L</div><div class="ob bc"><span>C</span></div></div>
<div class="orow" style="top:522px"><div class="oname">a20</div><div class="ob ba">A</div><div class="ob bs">S</div><div class="ob bh">H</div><div class="ob bl">L</div><div class="ob bc"><span>C</span></div></div>
  <div id="ptext">
<span class="pt" style="left:2px;top:4px;color:#40ff40">Mouse Mode</span>
<span class="pt" style="left:90px;top:4px;color:#ff8080">3-Button Viewing</span>
<span class="pt" style="left:7px;top:16px;color:#ff8080">Buttons</span>
<span class="pt" style="left:76.5px;top:16px;color:#8080ff">L</span>
<span class="pt" style="left:115.5px;top:16px;color:#8080ff">M</span>
<span class="pt" style="left:156.5px;top:16px;color:#8080ff">R</span>
<span class="pt" style="left:180.29999999999995px;top:16px;color:#8080ff">Wheel</span>
<span class="pt" style="left:14px;top:28px;color:#ff8080">&amp;</span>
<span class="pt" style="left:26px;top:28px;color:#ff8080">Keys</span>
<span class="pt" style="left:66px;top:28px;color:#e0e0e0">Rota Move MovZ Slab</span>
<span class="pt" style="left:26px;top:40px;color:#8080ff">Shft</span>
<span class="pt" style="left:66px;top:40px;color:#e0e0e0">+Box -Box Clip MovS</span>
<span class="pt" style="left:26px;top:52px;color:#8080ff">Ctrl</span>
<span class="pt" style="left:66px;top:52px;color:#e0e0e0">+/-  PkAt Pk1  MvSZ</span>
<span class="pt" style="left:26px;top:64px;color:#8080ff">CtSh</span>
<span class="pt" style="left:66px;top:64px;color:#e0e0e0">Sele Orig Clip MovZ</span>
<span class="pt" style="left:2px;top:76px;color:#8080ff">SnglClk</span>
<span class="pt" style="left:66px;top:76px;color:#e0e0e0">+/-  Cent Menu</span>
<span class="pt" style="left:10px;top:88px;color:#8080ff">DblClk</span>
<span class="pt" style="left:66px;top:88px;color:#e0e0e0">Menu   -   PkAt</span>
<span class="pt" style="left:2px;top:100px;color:#40ff40">Selecting</span>
<span class="pt" style="left:82px;top:100px;color:#ff8080">Residues</span>
<span class="pt" style="left:2px;top:112px;color:#40ff40">State</span>
<span class="pt" style="left:74px;top:112px;color:#e0e0e0">1/</span>
<span class="pt" style="left:114px;top:112px;color:#e0e0e0">1</span>
</div>
  <div id="pbtns">
<div class="pb" style="left:1px;width:6px"></div>
<div class="pb" style="left:8px;width:22px"></div>
<div class="pb" style="left:31px;width:23px"></div>
<div class="pb" style="left:55px;width:22px"></div>
<div class="pb" style="left:78px;width:23px"></div>
<div class="pb" style="left:102px;width:22px"></div>
<div class="pb" style="left:125px;width:23px"></div>
<div class="pb" style="left:149px;width:22px"></div>
<div class="pb" style="left:172px;width:23px"></div>
<div class="pb" style="left:196px;width:23px"></div>
<svg width="220" height="18" viewBox="783 993 220 18" style="position:absolute;left:0;top:0">
<g fill="#ffb8b8">
<rect x="797" y="997.7" width="1.6" height="8.6"/><polygon points="799,1002 805,997.7 805,1006.3"/>
<polygon points="822,1002.4 829,998.6 827,1002.4 829,1006.4"/>
<rect x="844" y="999" width="8.2" height="8"/>
<polygon points="868,997.7 877,1002.6 868,1007.5"/>
<polygon points="891.4,1006.6 899.3,1003 892,999 895,1003"/>
<polygon points="914.8,998.8 922.5,1002.9 914.8,1007"/><rect x="922.6" y="998.8" width="1.5" height="8.2"/>
<polygon points="961,999 972.4,999 966.7,1007.3"/>
</g>
<text x="938" y="1007.2" font-family="Liberation Mono" font-size="13.33" fill="#d8d8d8">S</text>
<text x="985.5" y="1007.2" font-family="Liberation Mono" font-size="13.33" fill="#d8d8d8">F</text>
<defs><clipPath id="gc"><rect x="990" y="1000" width="13" height="12"/></clipPath></defs><g clip-path="url(#gc)"><rect x="990" y="1000" width="13" height="12" fill="#2a2a2a"/><g stroke="#e8e8e8" stroke-width="1.6"><line x1="972.20" y1="1012.5" x2="986.20" y2="998.5"/><line x1="976.65" y1="1012.5" x2="990.65" y2="998.5"/><line x1="981.10" y1="1012.5" x2="995.10" y2="998.5"/><line x1="985.55" y1="1012.5" x2="999.55" y2="998.5"/><line x1="990.00" y1="1012.5" x2="1004.00" y2="998.5"/><line x1="994.45" y1="1012.5" x2="1008.45" y2="998.5"/><line x1="998.90" y1="1012.5" x2="1012.90" y2="998.5"/><line x1="1003.35" y1="1012.5" x2="1017.35" y2="998.5"/><line x1="1007.80" y1="1012.5" x2="1021.80" y2="998.5"/><line x1="1012.25" y1="1012.5" x2="1026.25" y2="998.5"/><line x1="1016.70" y1="1012.5" x2="1030.70" y2="998.5"/><line x1="1021.15" y1="1012.5" x2="1035.15" y2="998.5"/></g></g>
</svg>
</div>
 </div>
</div>
</body></html>
